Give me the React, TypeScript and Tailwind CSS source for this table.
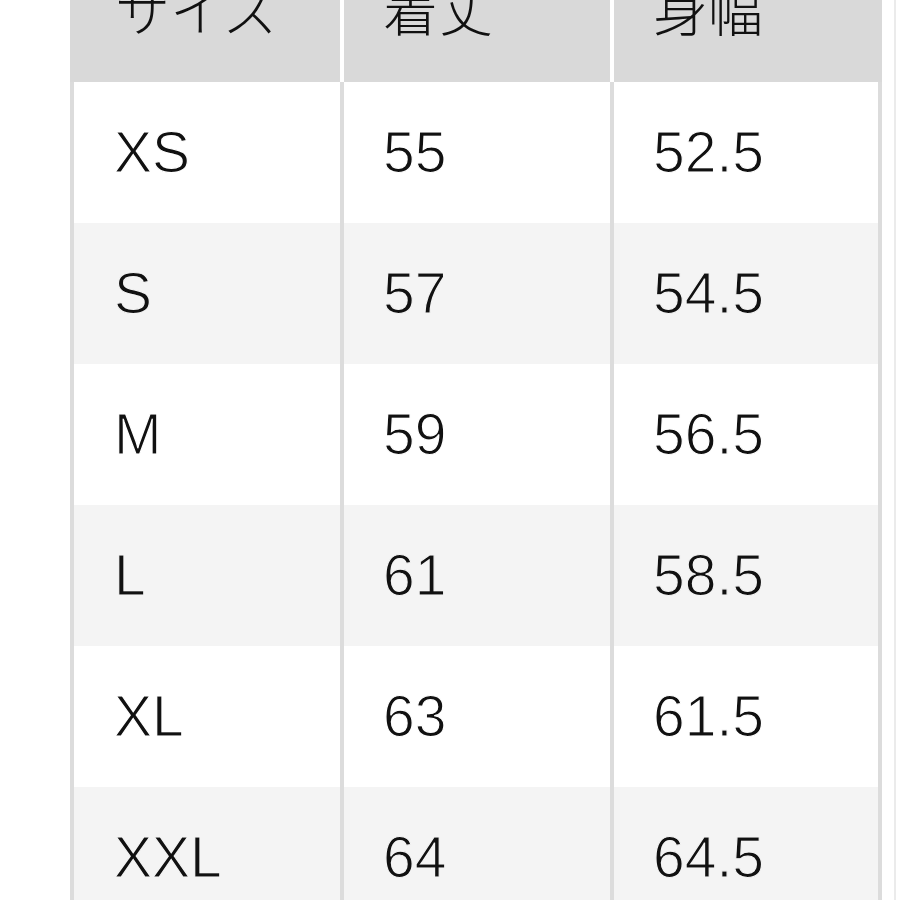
import React from "react";

const rows = [
  ["XS", "55", "52.5"],
  ["S", "57", "54.5"],
  ["M", "59", "56.5"],
  ["L", "61", "58.5"],
  ["XL", "63", "61.5"],
  ["XXL", "64", "64.5"],
];

const font = { fontFamily: '"Liberation Sans", "Noto Sans CJK JP", sans-serif' };
const cjk = { fontFamily: '"Noto Sans CJK JP", sans-serif' };

export default function App() {
  return (
    <div className="w-[900px] h-[900px] overflow-hidden bg-white flex text-[#111111]" style={font}>
      <div className="w-[70px] shrink-0" />
      <div className="w-[812px] shrink-0 flex flex-col">
        <div className="flex h-[82px] bg-[#d9d9d9]">
          <div className="w-[270px] flex items-end pl-[45px] pb-[47px]">
            <span className="text-[55px] leading-none font-light" style={cjk}>サイズ</span>
          </div>
          <div className="w-[4px] bg-white" />
          <div className="w-[266px] flex items-end pl-[39px] pb-[47px]">
            <span className="text-[55px] leading-none font-light" style={cjk}>着丈</span>
          </div>
          <div className="w-[4px] bg-white" />
          <div className="w-[268px] flex items-end pl-[39px] pb-[47px]">
            <span className="text-[55px] leading-none font-light" style={cjk}>身幅</span>
          </div>
        </div>
        {rows.map((r, i) => {
          const shaded = i % 2 === 1;
          const stroke = shaded
            ? "[-webkit-text-stroke:1.2px_#f4f4f4]"
            : "[-webkit-text-stroke:1.2px_#ffffff]";
          return (
            <div key={r[0]} className={`flex h-[141px] shrink-0 ${shaded ? "bg-[#f4f4f4]" : "bg-white"}`}>
              <div className="w-[4px] bg-[#dcdcdc]" />
              <div className="w-[266px] flex items-center pl-[40px]">
                <span className={`text-[57px] leading-none ${stroke}`}>{r[0]}</span>
              </div>
              <div className="w-[4px] bg-[#dcdcdc]" />
              <div className="w-[266px] flex items-center pl-[39px]">
                <span className={`text-[57px] leading-none ${stroke}`}>{r[1]}</span>
              </div>
              <div className="w-[4px] bg-[#dcdcdc]" />
              <div className="w-[264px] flex items-center pl-[39px]">
                <span className={`text-[57px] leading-none ${stroke}`}>{r[2]}</span>
              </div>
              <div className="w-[4px] bg-[#dcdcdc]" />
            </div>
          );
        })}
      </div>
      <div className="w-[12px] shrink-0" />
      <div className="w-[2px] shrink-0 bg-[#ebebeb]" />
    </div>
  );
}
